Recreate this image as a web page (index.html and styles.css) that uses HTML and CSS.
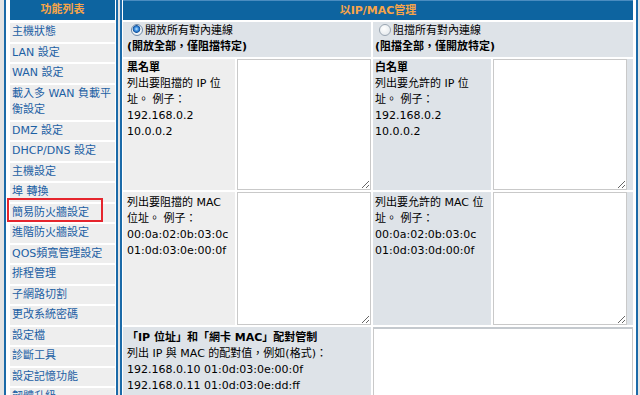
FILE: index.html
```html
<!DOCTYPE html>
<html lang="zh-Hant">
<head>
    <meta charset="UTF-8">
    <meta name="viewport" content="width=device-width, initial-scale=1.0">
    <title>以IP/MAC管理</title>
    <link rel="stylesheet" href="styles.css">
</head>
<body>

    <!-- Left menu -->
    <div id="menu">
        <div class="menu-title">功能列表</div>
        <a class="menu-item" href="#">主機狀態</a>
        <a class="menu-item" href="#">LAN 設定</a>
        <a class="menu-item" href="#">WAN 設定</a>
        <a class="menu-item" href="#">載入多 WAN 負載平衡設定</a>
        <a class="menu-item" href="#">DMZ 設定</a>
        <a class="menu-item" href="#">DHCP/DNS 設定</a>
        <a class="menu-item" href="#">主機設定</a>
        <a class="menu-item" href="#">埠 轉換</a>
        <a class="menu-item marked" href="#">簡易防火牆設定</a>
        <a class="menu-item" href="#">進階防火牆設定</a>
        <a class="menu-item" href="#">QOS頻寬管理設定</a>
        <a class="menu-item" href="#">排程管理</a>
        <a class="menu-item" href="#">子網路切割</a>
        <a class="menu-item" href="#">更改系統密碼</a>
        <a class="menu-item" href="#">設定檔</a>
        <a class="menu-item" href="#">診斷工具</a>
        <a class="menu-item" href="#">設定記憶功能</a>
        <a class="menu-item" href="#">韌體升級</a>
    </div>

    <!-- IP / MAC management -->
    <div id="content">
        <div class="form-grid">
            <div class="form-title">以IP/MAC管理</div>

            <div class="mode mode-left">
                <label><input type="radio" name="mode" checked>開放所有對內連線</label><br>
                <b>(開放全部，僅阻擋特定)</b>
            </div>
            <div class="mode mode-right">
                <label><input type="radio" name="mode">阻擋所有對內連線</label><br>
                <b>(阻擋全部，僅開放特定)</b>
            </div>

            <div class="label label-left">
                <b>黑名單</b><br>
                列出要阻擋的 IP 位址。 例子：<br>
                192.168.0.2<br>
                10.0.0.2
            </div>
            <div class="box box-left"><textarea id="denyIp"></textarea></div>
            <div class="label label-right">
                <b>白名單</b><br>
                列出要允許的 IP 位址。 例子：<br>
                192.168.0.2<br>
                10.0.0.2
            </div>
            <div class="box box-right"><textarea id="allowIp"></textarea></div>

            <div class="label label-left mac">
                列出要阻擋的 MAC 位址。 例子：<br>
                00:0a:02:0b:03:0c<br>
                01:0d:03:0e:00:0f
            </div>
            <div class="box box-left"><textarea id="denyMac"></textarea></div>
            <div class="label label-right mac">
                列出要允許的 MAC 位址。 例子：<br>
                00:0a:02:0b:03:0c<br>
                01:0d:03:0d:00:0f
            </div>
            <div class="box box-right"><textarea id="allowMac"></textarea></div>

            <div class="pair-label">
                <b>「IP 位址」和「網卡 MAC」配對管制</b><br>
                列出 IP 與 MAC 的配對值，例如(格式)：<br>
                192.168.0.10 01:0d:03:0e:00:0f<br>
                192.168.0.11 01:0d:03:0e:dd:ff
            </div>
            <div class="pair-box"><textarea id="pairList"></textarea></div>
        </div>
    </div>

</body>
</html>
```

FILE: styles.css
```css
html, body {
    overflow: hidden;
}
body {
    margin: 0;
    padding-left: 4px;
    display: flex;
    align-items: flex-start;
    gap: 2px;
    background-color: #e4e4e4;
    font-family: "DejaVu Sans", "Noto Sans CJK TC", sans-serif;
    font-size: 11px;
    color: #000;
}
#menu {
    width: 114px;
    box-sizing: border-box;
    min-height: 420px;
    border-left: 2px solid #1b6aa8;
    border-right: 2px solid #1b6aa8;
    background-color: #fff;
    padding: 0 1px 0 4px;
    display: flex;
    flex-direction: column;
    gap: 2px;
}
.menu-title {
    background-color: #0d64a0;
    color: #f7a449;
    font-weight: bold;
    text-align: center;
    line-height: 20px;
    margin-bottom: 1px;
}
.menu-item {
    display: block;
    background-color: #eeeeee;
    color: #1c60a4;
    text-decoration: none;
    line-height: 16.5px;
    padding: 1px 0 1px 2px;
}
.menu-item.marked {
    position: relative;
}
.menu-item.marked::after {
    content: "";
    position: absolute;
    left: -3px;
    top: -6px;
    width: 96px;
    height: 24px;
    box-sizing: border-box;
    border: 2px solid #e5252d;
}
#content {
    width: 518px;
    box-sizing: border-box;
    min-height: 420px;
    border-left: 2px solid #1b6aa8;
    border-right: 2px solid #1b6aa8;
    background-color: #fff;
    padding: 0 3px 0 1px;
}
.form-grid {
    display: grid;
    grid-template-columns: 112px 134px 118px 140px;
    grid-template-rows: 20px 35px 131px 133px 90px;
    gap: 2px;
    line-height: 16px;
}
.form-title {
    grid-column: 1 / 5;
    background-color: #0d64a0;
    border-top: 1px solid #4a8cc0;
    color: #f7a449;
    font-weight: bold;
    text-align: center;
    line-height: 19px;
}
.mode {
    grid-column: span 2;
    background-color: #dee3e8;
    padding-top: 1px;
}
.mode-left {
    padding-left: 4px;
}
.mode-right {
    padding-left: 2px;
}
.mode input {
    appearance: none;
    width: 12px;
    height: 12px;
    margin: 0 2px 0 4px;
    vertical-align: -2px;
    border: 1px solid #9aa6b2;
    border-radius: 50%;
    background: radial-gradient(circle at 40% 35%, #fff 0, #e8ecef 70%, #d4d9de 100%);
}
.mode input:checked {
    border-color: #6f8aa8;
    background: radial-gradient(circle at 45% 40%, #bfe4ff 0, #3b8ee0 2px, #15559f 3.5px, #f4f6f8 4.2px, #dfe4e8 100%);
}
.label {
    padding-top: 1px;
}
.label.mac {
    padding-top: 3px;
}
.label-left {
    background-color: #eeeeee;
    padding-left: 4px;
    padding-right: 8px;
}
.label-right {
    background-color: #dee3e8;
    padding-left: 2px;
    padding-right: 4px;
}
.box textarea,
.pair-box textarea {
    display: block;
    box-sizing: border-box;
    margin: 0;
    border: 1px solid #c9c9c9;
    background-color: #fff;
}
.box-left textarea {
    width: 100%;
    height: 100%;
}
.box-right {
    background-color: #dee3e8;
}
.box-right textarea {
    width: calc(100% - 6px);
    height: 100%;
}
.pair-label {
    grid-column: 1 / 3;
    background-color: #dee3e8;
    padding: 3px 4px 0;
}
.pair-box {
    grid-column: 3 / 5;
}
.pair-box textarea {
    width: 100%;
    height: 100%;
    border-top: 2px solid #c4c9ce;
}
```
